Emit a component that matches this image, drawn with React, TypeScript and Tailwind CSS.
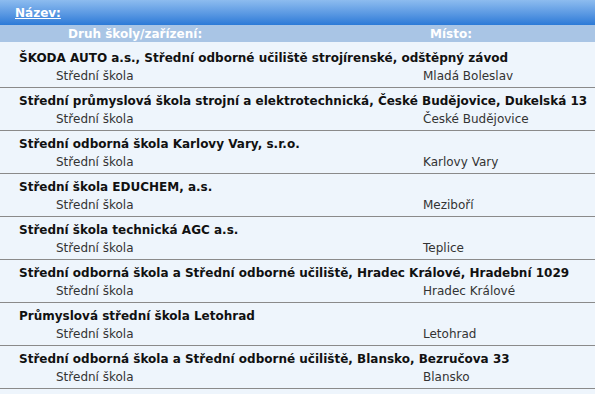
const schools = [
  { name: "ŠKODA AUTO a.s., Střední odborné učiliště strojírenské, odštěpný závod", type: "Střední škola", place: "Mladá Boleslav" },
  { name: "Střední průmyslová škola strojní a elektrotechnická, České Budějovice, Dukelská 13", type: "Střední škola", place: "České Budějovice" },
  { name: "Střední odborná škola Karlovy Vary, s.r.o.", type: "Střední škola", place: "Karlovy Vary" },
  { name: "Střední škola EDUCHEM, a.s.", type: "Střední škola", place: "Meziboří" },
  { name: "Střední škola technická AGC a.s.", type: "Střední škola", place: "Teplice" },
  { name: "Střední odborná škola a Střední odborné učiliště, Hradec Králové, Hradební 1029", type: "Střední škola", place: "Hradec Králové" },
  { name: "Průmyslová střední škola Letohrad", type: "Střední škola", place: "Letohrad" },
  { name: "Střední odborná škola a Střední odborné učiliště, Blansko, Bezručova 33", type: "Střední škola", place: "Blansko" },
];

export default function App() {
  return (
    <div className="w-[595px] h-[394px] overflow-hidden bg-[#eef5fc] font-['DejaVu_Sans',sans-serif]">
      <div className="h-[25px] flex items-center pl-[15px] bg-gradient-to-b from-[#8dbcef] to-[#2b7ad7]">
        <a className="text-white font-bold text-[12px] underline">Název:</a>
      </div>
      <div className="h-[17px] flex items-center bg-[#a9c5e5] text-white font-bold text-[12px]">
        <span className="pl-[68px] w-[430px]">Druh školy/zařízení:</span>
        <span>Místo:</span>
      </div>
      <div className="pt-[3px]">
        {schools.map((s) => (
          <div key={s.name} className="h-[43px] border-b border-[#8a8a8a] flex flex-col pt-[4px]">
            <div className="pl-[19px] font-bold text-[12px] text-[#111] leading-[18px] whitespace-nowrap">{s.name}</div>
            <div className="flex text-[12px] text-[#333] leading-[18px]">
              <span className="pl-[56px] w-[423px]">{s.type}</span>
              <span>{s.place}</span>
            </div>
          </div>
        ))}
      </div>
    </div>
  );
}
